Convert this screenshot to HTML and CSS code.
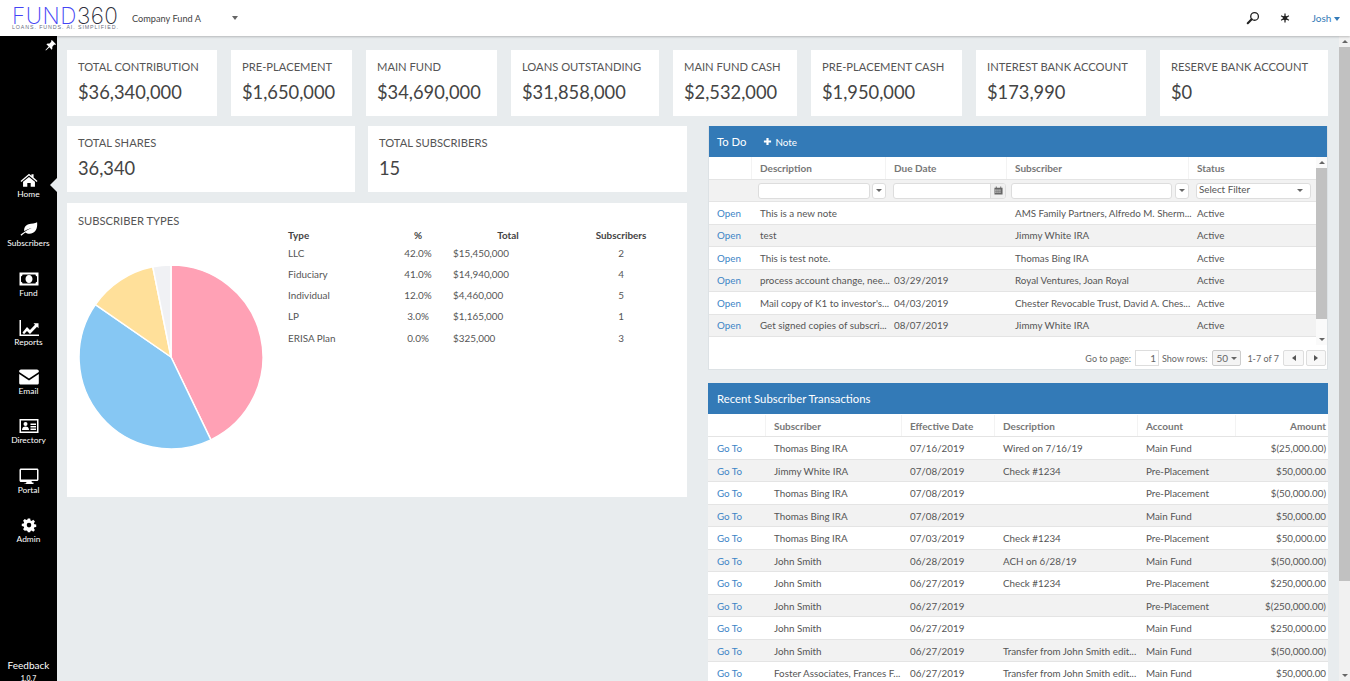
FILE: index.html
```html
<!DOCTYPE html>
<html lang="en">
<head>
<meta charset="utf-8">
<title>Fund360</title>
<link rel="stylesheet" href="styles.css">
</head>
<body>
<div class="app">
  <header class="topbar">
    <div class="logo">
      <div class="logo-mark"><span class="logo-fund">FUND</span><span class="logo-num">360</span></div>
      <div class="logo-tag">LOANS. FUNDS. AI. SIMPLIFIED.</div>
    </div>
    <div class="company">Company Fund A</div>
    <span class="caret company-caret"></span>
    <div class="top-actions">
      <svg class="top-search" viewBox="0 0 16 16"><circle cx="9.8" cy="6.2" r="4.4" fill="none" stroke="#222" stroke-width="1.5"/><path d="M6.5 9.5 2 14" stroke="#222" stroke-width="2.4" stroke-linecap="round"/></svg>
      <svg class="top-star" viewBox="0 0 12 12"><path d="M6 .5v11M1.300 3.300l9.400 5.400M1.300 8.700l9.400-5.400" stroke="#222" stroke-width="1.500"/><circle cx="6" cy="6" r="2.800" fill="#222"/></svg>
      <span class="user">Josh <span class="caret caret-blue"></span></span>
    </div>
  </header>
  <div class="shell">
    <nav class="sidebar">
      <svg class="pin" viewBox="0 0 12 12"><path d="M7.500 0 12 4.500 11 5.500 10 5 7.800 7.500C8.300 8.800 8 9.800 7.300 10.500L4.800 8 1 11.500.5 11 4 7.200 1.500 4.700C2.200 4 3.200 3.700 4.500 4.200L7 2 6.500 1z" fill="#fff"/></svg>
      <div class="nav-list">
        <a class="nav-item">
          <svg viewBox="0 0 20 16"><g transform="translate(10 8) scale(.85) translate(-10 -8)"><path d="M10 0.500 12.900 3V1.200h2.500v4L20 9.100l-1 1.200-9-7.500-9 7.500-1-1.200zM3 10.200l7-5.800 7 5.800V16h-5v-4.500H8V16H3z" fill="#fff"/></g></svg>
          <span>Home</span>
        </a>
        <a class="nav-item">
          <svg viewBox="0 0 20 16"><g transform="translate(10 8) scale(.9) translate(-10 -8)"><path d="M19 0.500c.5 5-.5 9.500-4.500 11.800-3 1.700-6.500 1.200-8.500-.4C4.500 13 3 14.400 1.500 15.500L.5 14.500c1.800-1.300 4-3 6.800-4.700 2.200-1.300 4.400-2.100 5.700-2.800-2.500.5-5.500 1.700-8.100 3.400C4 7.500 5.500 4 9.500 2.700c3.500-1 7-.4 9.500-2.200z" fill="#fff"/></g></svg>
          <span>Subscribers</span>
        </a>
        <a class="nav-item">
          <svg viewBox="0 0 20 16"><path fill-rule="evenodd" d="M.5 1.500h19v13H.5zM3.500 3.500c0 1-.8 1.800-1.500 1.800v5.400c.7 0 1.500.8 1.500 1.800h13c0-1 .8-1.800 1.500-1.800V5.300c-.7 0-1.500-.8-1.500-1.800zM10 4c2.100 0 3.500 1.800 3.500 4s-1.400 4-3.500 4-3.500-1.800-3.500-4 1.400-4 3.500-4z" fill="#fff"/><path d="M9 5.800h1.600v3.800h1v1H8.400v-1h1V7L8.600 7.600 8 6.800z" fill="#fff"/></svg>
          <span>Fund</span>
        </a>
        <a class="nav-item">
          <svg viewBox="0 0 20 16"><path d="M.5 0v16H20v-1.400H2V0z" fill="#fff"/><path d="M3.500 12.500 8 7l3 3 5-5.300-1.500-1.500H19.500v5l-1.500-1.500-7 7.300-3-3-3 3.200z" fill="#fff"/></svg>
          <span>Reports</span>
        </a>
        <a class="nav-item">
          <svg viewBox="0 0 20 16"><path d="M2 0.500h16c1 0 1.800.8 1.800 1.800v.6L10 9.500.2 2.900v-.6C.2 1.300 1 .5 2 .5zM.2 5l9.800 6.500L19.800 5v9c0 1-.8 1.500-1.800 1.500H2c-1 0-1.800-.5-1.800-1.500z" fill="#fff"/></svg>
          <span>Email</span>
        </a>
        <a class="nav-item">
          <svg viewBox="0 0 20 16"><path fill-rule="evenodd" d="M.5 1h19v14H.5zM2 2.500v11h16v-11z" fill="#fff"/><circle cx="6.500" cy="6" r="2" fill="#fff"/><path d="M3 12c0-2.500 1.500-3.600 3.500-3.600S10 9.500 10 12zM11.500 5.500h5.500v1.400h-5.500zM11.500 8h5.500v1.400h-5.500zM11.500 10.500h5.500v1.400h-5.500z" fill="#fff"/></svg>
          <span>Directory</span>
        </a>
        <a class="nav-item">
          <svg viewBox="0 0 20 16"><path fill-rule="evenodd" d="M2 .5h16c.8 0 1.500.7 1.500 1.500v9.500c0 .8-.7 1.500-1.500 1.500h-5.500l.5 1.500h1.500V16H5.500v-.5H7l.5-1.500H2c-.8 0-1.500-.7-1.500-1.500V2C.5 1.200 1.200.5 2 .5zm0 1.500v9.500h16V2z" fill="#fff"/></svg>
          <span>Portal</span>
        </a>
        <a class="nav-item">
          <svg viewBox="0 0 20 16"><g transform="translate(10 8) scale(.85) translate(-10 -7.600)"><path fill-rule="evenodd" d="M8.600 0h2.800l.4 2.200 1.300.6 1.900-1.300 2 2-1.300 1.900.6 1.300 2.200.4v2.800l-2.200.4-.6 1.300 1.300 1.900-2 2-1.900-1.300-1.300.6-.4 1.200H8.600l-.4-1.200-1.300-.6L5 14.500l-2-2 1.300-1.900-.6-1.300L1.500 8.900V6.100l2.200-.4.6-1.300L3 2.500l2-2 1.900 1.300 1.300-.6zM10 5a2.700 2.700 0 1 0 0 5.400A2.700 2.700 0 0 0 10 5z" fill="#fff"/></g></svg>
          <span>Admin</span>
        </a>
      </div>
      <div class="feedback">Feedback</div>
      <div class="version">1.0.7</div>
      <span class="notch"></span>
    </nav>
    <main class="main">
      <section class="kpi-row">
        <div class="card kpi"><div class="kpi-label">TOTAL CONTRIBUTION</div><div class="kpi-value">$36,340,000</div></div>
        <div class="card kpi"><div class="kpi-label">PRE-PLACEMENT</div><div class="kpi-value">$1,650,000</div></div>
        <div class="card kpi"><div class="kpi-label">MAIN FUND</div><div class="kpi-value">$34,690,000</div></div>
        <div class="card kpi"><div class="kpi-label">LOANS OUTSTANDING</div><div class="kpi-value">$31,858,000</div></div>
        <div class="card kpi"><div class="kpi-label">MAIN FUND CASH</div><div class="kpi-value">$2,532,000</div></div>
        <div class="card kpi"><div class="kpi-label">PRE-PLACEMENT CASH</div><div class="kpi-value">$1,950,000</div></div>
        <div class="card kpi"><div class="kpi-label">INTEREST BANK ACCOUNT</div><div class="kpi-value">$173,990</div></div>
        <div class="card kpi"><div class="kpi-label">RESERVE BANK ACCOUNT</div><div class="kpi-value">$0</div></div>
      </section>
      <div class="columns">
        <div class="col-left">
          <div class="stat-row">
            <div class="card kpi stat-shares"><div class="kpi-label">TOTAL SHARES</div><div class="kpi-value">36,340</div></div>
            <div class="card kpi stat-subs"><div class="kpi-label">TOTAL SUBSCRIBERS</div><div class="kpi-value">15</div></div>
          </div>
          <div class="card types">
            <div class="types-chart">
              <div class="kpi-label">SUBSCRIBER TYPES</div>
              <svg class="pie" viewBox="0 0 186 186">
                <path d="M93 93V1A92 92 0 0 1 132.900 175.900Z" fill="#ffa1b5" stroke="#fff" stroke-width="1.500"/>
                <path d="M93 93 132.900 175.900A92 92 0 0 1 17.400 40.600Z" fill="#86c7f3" stroke="#fff" stroke-width="1.500"/>
                <path d="M93 93 17.400 40.600A92 92 0 0 1 74.800 2.800Z" fill="#ffe09a" stroke="#fff" stroke-width="1.500"/>
                <path d="M93 93 74.800 2.800A92 92 0 0 1 93 1Z" fill="#f0f1f4" stroke="#fff" stroke-width="1.500"/>
              </svg>
            </div>
            <table class="types-table">
              <thead><tr><th class="t-type">Type</th><th class="t-pct">%</th><th class="t-total">Total</th><th class="t-subs">Subscribers</th></tr></thead>
              <tbody>
                <tr><td>LLC</td><td class="c">42.0%</td><td>$15,450,000</td><td class="c">2</td></tr>
                <tr><td>Fiduciary</td><td class="c">41.0%</td><td>$14,940,000</td><td class="c">4</td></tr>
                <tr><td>Individual</td><td class="c">12.0%</td><td>$4,460,000</td><td class="c">5</td></tr>
                <tr><td>LP</td><td class="c">3.0%</td><td>$1,165,000</td><td class="c">1</td></tr>
                <tr><td>ERISA Plan</td><td class="c">0.0%</td><td>$325,000</td><td class="c">3</td></tr>
              </tbody>
            </table>
          </div>
        </div>
        <div class="col-right">
          <section class="panel todo">
            <div class="panel-head"><span>To Do</span><span class="add-note"><svg class="plus" viewBox="0 0 10 10"><path d="M5 1v8M1 5h8" stroke="#fff" stroke-width="2.400"/></svg>Note</span></div>
            <div class="todo-body">
              <div class="todo-grid-wrap">
                <div class="row todo-cols head"><span></span><span>Description</span><span>Due Date</span><span>Subscriber</span><span>Status</span></div>
                <div class="row todo-cols filter">
                  <span></span>
                  <span class="filter-cell fc-desc"><span class="input"></span><span class="mini-btn"><span class="caret caret-small"></span></span></span>
                  <span class="filter-cell fc-date"><span class="input date-input"><span class="cal-box"><svg class="cal" viewBox="0 0 10 10"><path d="M.5 2h9v7.500h-9z" fill="#666"/><path d="M2 .5h1v2H2zM7 .5h1v2H7z" fill="#666"/><path d="M1.500 4h1.300v1.200H1.500zM3.800 4h1.200v1.200H3.800zM6 4h1.200v1.200H6zM1.500 6.200h1.300v1.200H1.500zM3.800 6.200h1.200v1.200H3.800zM6 6.200h1.200v1.200H6z" fill="#eee"/></svg></span></span></span>
                  <span class="filter-cell fc-sub"><span class="input"></span><span class="mini-btn"><span class="caret caret-small"></span></span></span>
                  <span class="filter-cell fc-status"><span class="select"><span class="select-text">Select Filter</span><span class="caret caret-small"></span></span></span>
                </div>
                <div class="row todo-cols"><a class="link">Open</a><span class="cell">This is a new note</span><span class="cell"></span><span class="cell">AMS Family Partners, Alfredo M. Sherm...</span><span class="cell">Active</span></div>
                <div class="row todo-cols alt"><a class="link">Open</a><span class="cell">test</span><span class="cell"></span><span class="cell">Jimmy White IRA</span><span class="cell">Active</span></div>
                <div class="row todo-cols"><a class="link">Open</a><span class="cell">This is test note.</span><span class="cell"></span><span class="cell">Thomas Bing IRA</span><span class="cell">Active</span></div>
                <div class="row todo-cols alt"><a class="link">Open</a><span class="cell">process account change, nee...</span><span class="cell">03/29/2019</span><span class="cell">Royal Ventures, Joan Royal</span><span class="cell">Active</span></div>
                <div class="row todo-cols"><a class="link">Open</a><span class="cell">Mail copy of K1 to investor's...</span><span class="cell">04/03/2019</span><span class="cell">Chester Revocable Trust, David A. Ches...</span><span class="cell">Active</span></div>
                <div class="row todo-cols alt"><a class="link">Open</a><span class="cell">Get signed copies of subscri...</span><span class="cell">08/07/2019</span><span class="cell">Jimmy White IRA</span><span class="cell">Active</span></div>
              </div>
              <div class="vscroll inner-scroll"><span class="arrow-up"></span><span class="thumb inner-thumb"></span><span class="arrow-down"></span></div>
            </div>
            <div class="pager">
              <span>Go to page:</span><span class="page-input">1</span><span class="page-show">Show rows:</span>
              <span class="page-select">50<span class="caret caret-small"></span></span>
              <span class="page-count">1-7 of 7</span>
              <span class="page-btn"><span class="tri-left"></span></span><span class="page-btn"><span class="tri-right"></span></span>
            </div>
          </section>
          <section class="panel tx">
            <div class="panel-head">Recent Subscriber Transactions</div>
            <div class="row tx-cols head"><span></span><span>Subscriber</span><span>Effective Date</span><span>Description</span><span>Account</span><span class="amt">Amount</span></div>
            <div class="row tx-cols"><a class="link">Go To</a><span class="cell">Thomas Bing IRA</span><span class="cell">07/16/2019</span><span class="cell">Wired on 7/16/19</span><span class="cell">Main Fund</span><span class="cell amt">$(25,000.00)</span></div>
            <div class="row tx-cols alt"><a class="link">Go To</a><span class="cell">Jimmy White IRA</span><span class="cell">07/08/2019</span><span class="cell">Check #1234</span><span class="cell">Pre-Placement</span><span class="cell amt">$50,000.00</span></div>
            <div class="row tx-cols"><a class="link">Go To</a><span class="cell">Thomas Bing IRA</span><span class="cell">07/08/2019</span><span class="cell"></span><span class="cell">Pre-Placement</span><span class="cell amt">$(50,000.00)</span></div>
            <div class="row tx-cols alt"><a class="link">Go To</a><span class="cell">Thomas Bing IRA</span><span class="cell">07/08/2019</span><span class="cell"></span><span class="cell">Main Fund</span><span class="cell amt">$50,000.00</span></div>
            <div class="row tx-cols"><a class="link">Go To</a><span class="cell">Thomas Bing IRA</span><span class="cell">07/03/2019</span><span class="cell">Check #1234</span><span class="cell">Pre-Placement</span><span class="cell amt">$50,000.00</span></div>
            <div class="row tx-cols alt"><a class="link">Go To</a><span class="cell">John Smith</span><span class="cell">06/28/2019</span><span class="cell">ACH on 6/28/19</span><span class="cell">Main Fund</span><span class="cell amt">$(50,000.00)</span></div>
            <div class="row tx-cols"><a class="link">Go To</a><span class="cell">John Smith</span><span class="cell">06/27/2019</span><span class="cell">Check #1234</span><span class="cell">Pre-Placement</span><span class="cell amt">$250,000.00</span></div>
            <div class="row tx-cols alt"><a class="link">Go To</a><span class="cell">John Smith</span><span class="cell">06/27/2019</span><span class="cell"></span><span class="cell">Pre-Placement</span><span class="cell amt">$(250,000.00)</span></div>
            <div class="row tx-cols"><a class="link">Go To</a><span class="cell">John Smith</span><span class="cell">06/27/2019</span><span class="cell"></span><span class="cell">Main Fund</span><span class="cell amt">$250,000.00</span></div>
            <div class="row tx-cols alt"><a class="link">Go To</a><span class="cell">John Smith</span><span class="cell">06/27/2019</span><span class="cell">Transfer from John Smith edit...</span><span class="cell">Main Fund</span><span class="cell amt">$(50,000.00)</span></div>
            <div class="row tx-cols"><a class="link">Go To</a><span class="cell">Foster Associates, Frances F...</span><span class="cell">06/27/2019</span><span class="cell">Transfer from John Smith edit...</span><span class="cell">Main Fund</span><span class="cell amt">$50,000.00</span></div>
          </section>
        </div>
      </div>
    </main>
    <div class="vscroll page-scroll"><span class="arrow-up"></span><span class="thumb page-thumb"></span><span class="arrow-down"></span></div>
  </div>
</div>
</body>
</html>
```
FILE: styles.css
```css
* { box-sizing: border-box; }
html, body { margin: 0; height: 100%; overflow: hidden; }
body { font-family: Lato, "Open Sans", sans-serif; color: #555; font-size: 10px; background: #e8ecee; }
.app { height: 681px; display: flex; flex-direction: column; overflow: hidden; }

.topbar { height: 36px; flex: none; background: #fff; display: flex; align-items: center; padding-left: 12px; box-shadow: 0 1px 2px rgba(0,0,0,.22); position: relative; z-index: 2; }
.logo { width: 120px; flex: none; }
.logo-mark { font-family: Inter, sans-serif; font-weight: 200; font-size: 22.500px; line-height: 17px; letter-spacing: .5px; white-space: nowrap; }
.logo-fund { color: #4444f5; }
.logo-num { color: #2d2d3a; }
.logo-tag { font-family: "Liberation Sans", sans-serif; font-size: 5.300px; line-height: 6px; letter-spacing: .9px; color: #6a6f80; white-space: nowrap; }
.company { color: #444; font-size: 9.200px; width: 100px; flex: none; }
.caret { display: inline-block; width: 0; height: 0; border-left: 3.500px solid transparent; border-right: 3.500px solid transparent; border-top: 4px solid #666; vertical-align: middle; }
.top-actions { margin-left: auto; display: flex; align-items: center; padding-right: 10px; }
.top-search { width: 14px; height: 14px; margin-right: 20px; }
.top-star { width: 10px; height: 10px; margin-right: 22px; }
.user { color: #337ab7; font-size: 10px; }
.caret-blue { border-top-color: #337ab7; }

.shell { flex: 1; min-height: 0; display: flex; }
.sidebar { width: 57px; flex: none; background: #000; color: #fff; display: flex; flex-direction: column; align-items: center; position: relative; padding-top: 135px; }
.pin { position: absolute; top: 4px; right: 1px; width: 11px; height: 11px; }
.nav-list { display: flex; flex-direction: column; width: 100%; }
.nav-item { height: 49.250px; display: flex; flex-direction: column; align-items: center; color: #fff; font-size: 8.400px; line-height: 11px; }
.nav-item svg { width: 20px; height: 16px; margin-top: 1px; margin-bottom: 1px; }
.feedback { margin-top: auto; font-size: 10px; line-height: 12px; }
.version { font-size: 7px; line-height: 10px; margin: 2px 0 -2px; font-weight: 700; color: #ddd; }
.notch { position: absolute; right: 0; top: 142px; border-top: 7px solid transparent; border-bottom: 7px solid transparent; border-right: 7px solid #e8ecee; }

.main { flex: 1; min-width: 0; padding: 14px 11px 0 10px; overflow: hidden; }
.card { background: #fff; }
.kpi-row { display: grid; grid-template-columns: 150px 121px 131px 148px 124px 151px 170px 168px; gap: 14px; height: 66px; margin-bottom: 10px; }
.kpi { padding: 9px 11px; }
.kpi-label { font-size: 11.200px; line-height: 16px; color: #555; white-space: nowrap; }
.kpi-value { font-size: 18.300px; line-height: 24px; margin-top: 5px; color: #444; white-space: nowrap; }

.columns { display: flex; gap: 21px; }
.col-left, .col-right { width: 620px; flex: none; }
.stat-row { display: flex; gap: 13px; height: 66px; margin-bottom: 11px; }
.stat-shares { flex: 0 0 288px; }
.stat-subs { flex: 1; }
.types { height: 294px; display: flex; padding: 10px 11px; }
.types-chart { width: 210px; flex: none; }
.pie { display: block; width: 186px; height: 186px; margin-top: 35px; }
.types-table { border-collapse: collapse; table-layout: fixed; margin-top: 15px; width: 384px; font-size: 9.900px; align-self: flex-start; }
.types-table th { font-weight: 700; color: #444; padding: 0; height: 14px; text-align: center; }
.types-table td { padding: 0; height: 21.250px; color: #555; }
.t-type { width: 102px; text-align: left !important; }
.t-pct { width: 56px; }
.t-total { width: 124px; }
.t-subs { width: 102px; }
.c { text-align: center; }
.types-table td:nth-child(3) { padding-left: 7px; }

.panel { background: #fff; overflow: hidden; }
.todo { height: 244px; margin-bottom: 13px; display: flex; flex-direction: column; border: 1px solid #dde2e5; border-top: 0; }
.panel-head { height: 31px; flex: none; background: #337ab7; color: #fff; display: flex; align-items: center; padding-left: 9px; font-size: 11.300px; }
.todo .panel-head { margin: 0 -1px; }
.add-note { display: inline-flex; align-items: center; margin-left: 16px; font-size: 9.800px; }
.plus { width: 9px; height: 9px; margin-right: 4px; }

.todo-body { height: 188px; flex: none; display: flex; }
.todo-grid-wrap { flex: 1; min-width: 0; overflow: hidden; }
.row { display: grid; align-items: center; height: 22.500px; border-bottom: 1px solid #e4e4e4; font-size: 9.800px; color: #555; }
.row.alt { background: #f2f2f2; }
.row.head { font-weight: 700; color: #777; height: 23px; font-size: 10px; }
.row.filter { height: 22px; background: #f2f2f2; }
.todo-cols { grid-template-columns: 43px 134px 121px 182px 128px; }
.tx-cols { grid-template-columns: 58px 136px 93px 143px 98px 1fr; }
.row > * { padding-left: 8px; white-space: nowrap; }
.tx-cols > .link { padding-left: 9px; }
.tx-cols > .amt { text-align: right; padding-right: 2px; padding-left: 0; }
.tx .row { padding-top: 1px; }
.head > span { align-self: stretch; display: flex; align-items: center; border-right: 1px solid #f3f3f3; }
.head > .amt { justify-content: flex-end; border-right: 0; }
.link { color: #3d85c6; }

.row > .filter-cell { display: flex; align-items: center; }
.row > .fc-desc { padding: 0 0 0 6px; gap: 2px; }
.row > .fc-date { padding: 0 1px 0 7px; }
.row > .fc-sub { padding: 0 0 0 4px; gap: 3px; }
.row > .fc-status { padding: 0 6px 0 7px; }
.input { flex: 1; height: 16px; background: #fff; border: 1px solid #ddd; border-radius: 3px; display: block; }
.date-input { display: flex; justify-content: flex-end; overflow: hidden; }
.cal-box { width: 15px; background: #f0f0f0; border-left: 1px solid #ddd; display: flex; align-items: center; justify-content: center; }
.cal { width: 9px; height: 9px; }
.mini-btn { width: 14px; height: 16px; flex: none; background: #fff; border: 1px solid #ddd; border-radius: 3px; display: flex; align-items: center; justify-content: center; }
.caret-small { border-left-width: 3px; border-right-width: 3px; border-top-width: 3.500px; }
.select { flex: 1; height: 16px; background: #fff; border: 1px solid #ddd; border-radius: 3px; display: flex; align-items: center; justify-content: space-between; padding: 0 7px 0 2px; color: #555; font-size: 9.800px; }
.select-text { line-height: 12px; margin-top: -3px; }

.vscroll { display: flex; flex-direction: column; align-items: center; background: #f1f1f1; flex: none; position: relative; }
.inner-scroll { width: 11px; background: #fafafa; }
.page-scroll { width: 11px; }
.arrow-up { width: 0; height: 0; border-left: 3px solid transparent; border-right: 3px solid transparent; border-bottom: 3.500px solid #666; margin-top: 4px; }
.arrow-down { width: 0; height: 0; border-left: 3px solid transparent; border-right: 3px solid transparent; border-top: 3.500px solid #666; position: absolute; bottom: 4px; }
.thumb { width: 100%; background: #c1c1c1; margin-top: 4px; }
.inner-thumb { height: 151px; }
.page-thumb { height: 534px; }

.pager { flex: 1; display: flex; align-items: center; justify-content: flex-end; padding: 2px 1px 0 0; font-size: 9px; color: #666; }
.page-input { width: 24px; height: 16px; border: 1px solid #ddd; margin-left: 4px; text-align: right; padding-right: 2px; line-height: 15px; font-size: 10px; }
.page-show { margin-left: 3px; }
.page-select { width: 29px; height: 16px; margin-left: 5px; border: 1px solid #ccc; border-radius: 2px; background: #f4f4f4; display: flex; align-items: center; justify-content: space-between; padding: 0 3px; font-size: 10px; }
.page-count { margin: 0 4px 0 6px; }
.page-btn { width: 21px; height: 16px; border: 1px solid #ddd; border-radius: 2px; background: #f8f8f8; display: flex; align-items: center; justify-content: center; }
.page-btn + .page-btn { margin-left: 2px; width: 20px; }
.tri-left { border-top: 3px solid transparent; border-bottom: 3px solid transparent; border-right: 4px solid #555; }
.tri-right { border-top: 3px solid transparent; border-bottom: 3px solid transparent; border-left: 4px solid #555; }
```
